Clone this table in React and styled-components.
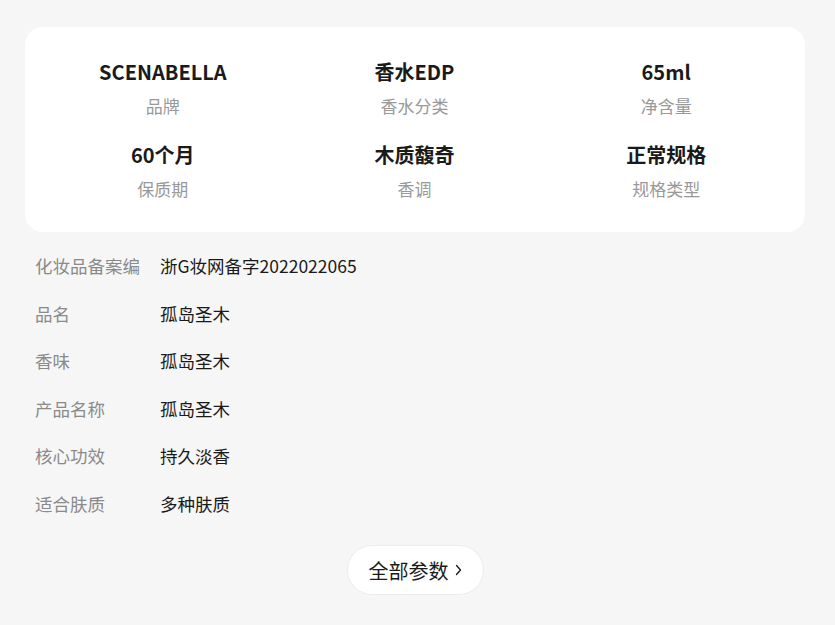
import React from "react";
import styled, { createGlobalStyle } from "styled-components";

const Global = createGlobalStyle`
  html, body { margin: 0; padding: 0; background: #f6f6f6; }
  body { font-family: "Noto Sans CJK SC", "Noto Sans", sans-serif; color: #1a1a1a; }
`;

const Page = styled.div`
  padding: 27px 30px 30px 25px;
  display: flex;
  flex-direction: column;
`;

const Card = styled.div`
  background: #fff;
  border-radius: 18px;
  padding: 31px 13px 32px 12px;
  display: grid;
  grid-template-columns: repeat(3, 1fr);
  row-gap: 24px;
`;

const Item = styled.div`
  display: flex;
  flex-direction: column;
  align-items: center;
  gap: 9px;
`;

const Value = styled.div`
  font-size: 20px;
  line-height: 28px;
  font-weight: 700;
  color: #1a1a1a;
`;

const Label = styled.div`
  font-size: 17px;
  line-height: 22px;
  color: #999;
`;

const List = styled.div`
  display: flex;
  flex-direction: column;
  margin-top: 10px;
  padding-left: 10px;
`;

const Row = styled.div`
  display: flex;
  align-items: center;
  height: 47.5px;
  font-size: 17.5px;
`;

const RowLabel = styled.div`
  width: 125px;
  flex-shrink: 0;
  color: #8a8a8a;
  white-space: nowrap;
  overflow: hidden;
`;

const RowValue = styled.div`
  color: #1a1a1a;
`;

const ButtonWrap = styled.div`
  display: flex;
  justify-content: center;
  margin-top: 18px;
`;

const MoreButton = styled.button`
  display: flex;
  align-items: center;
  gap: 6px;
  height: 50px;
  padding: 0 21px 0 21px;
  background: #fff;
  border: 1px solid #ececec;
  border-radius: 25px;
  font-family: inherit;
  font-size: 20px;
  color: #1a1a1a;
  cursor: pointer;
`;

const specs = [
  ["SCENABELLA", "品牌"],
  ["香水EDP", "香水分类"],
  ["65ml", "净含量"],
  ["60个月", "保质期"],
  ["木质馥奇", "香调"],
  ["正常规格", "规格类型"],
];

const rows = [
  ["化妆品备案编", "浙G妆网备字2022022065"],
  ["品名", "孤岛圣木"],
  ["香味", "孤岛圣木"],
  ["产品名称", "孤岛圣木"],
  ["核心功效", "持久淡香"],
  ["适合肤质", "多种肤质"],
];

export default function App() {
  return (
    <>
      <Global />
      <Page>
        <Card>
          {specs.map(([v, l]) => (
            <Item key={l}>
              <Value>{v}</Value>
              <Label>{l}</Label>
            </Item>
          ))}
        </Card>
        <List>
          {rows.map(([l, v]) => (
            <Row key={l}>
              <RowLabel>{l}</RowLabel>
              <RowValue>{v}</RowValue>
            </Row>
          ))}
        </List>
        <ButtonWrap>
          <MoreButton>
            全部参数
            <svg width="7" height="12" viewBox="0 0 7 12" fill="none">
              <path d="M1.5 1.5 L5.5 6 L1.5 10.5" stroke="#1a1a1a" strokeWidth="1.3" strokeLinecap="round" strokeLinejoin="round" />
            </svg>
          </MoreButton>
        </ButtonWrap>
      </Page>
    </>
  );
}
